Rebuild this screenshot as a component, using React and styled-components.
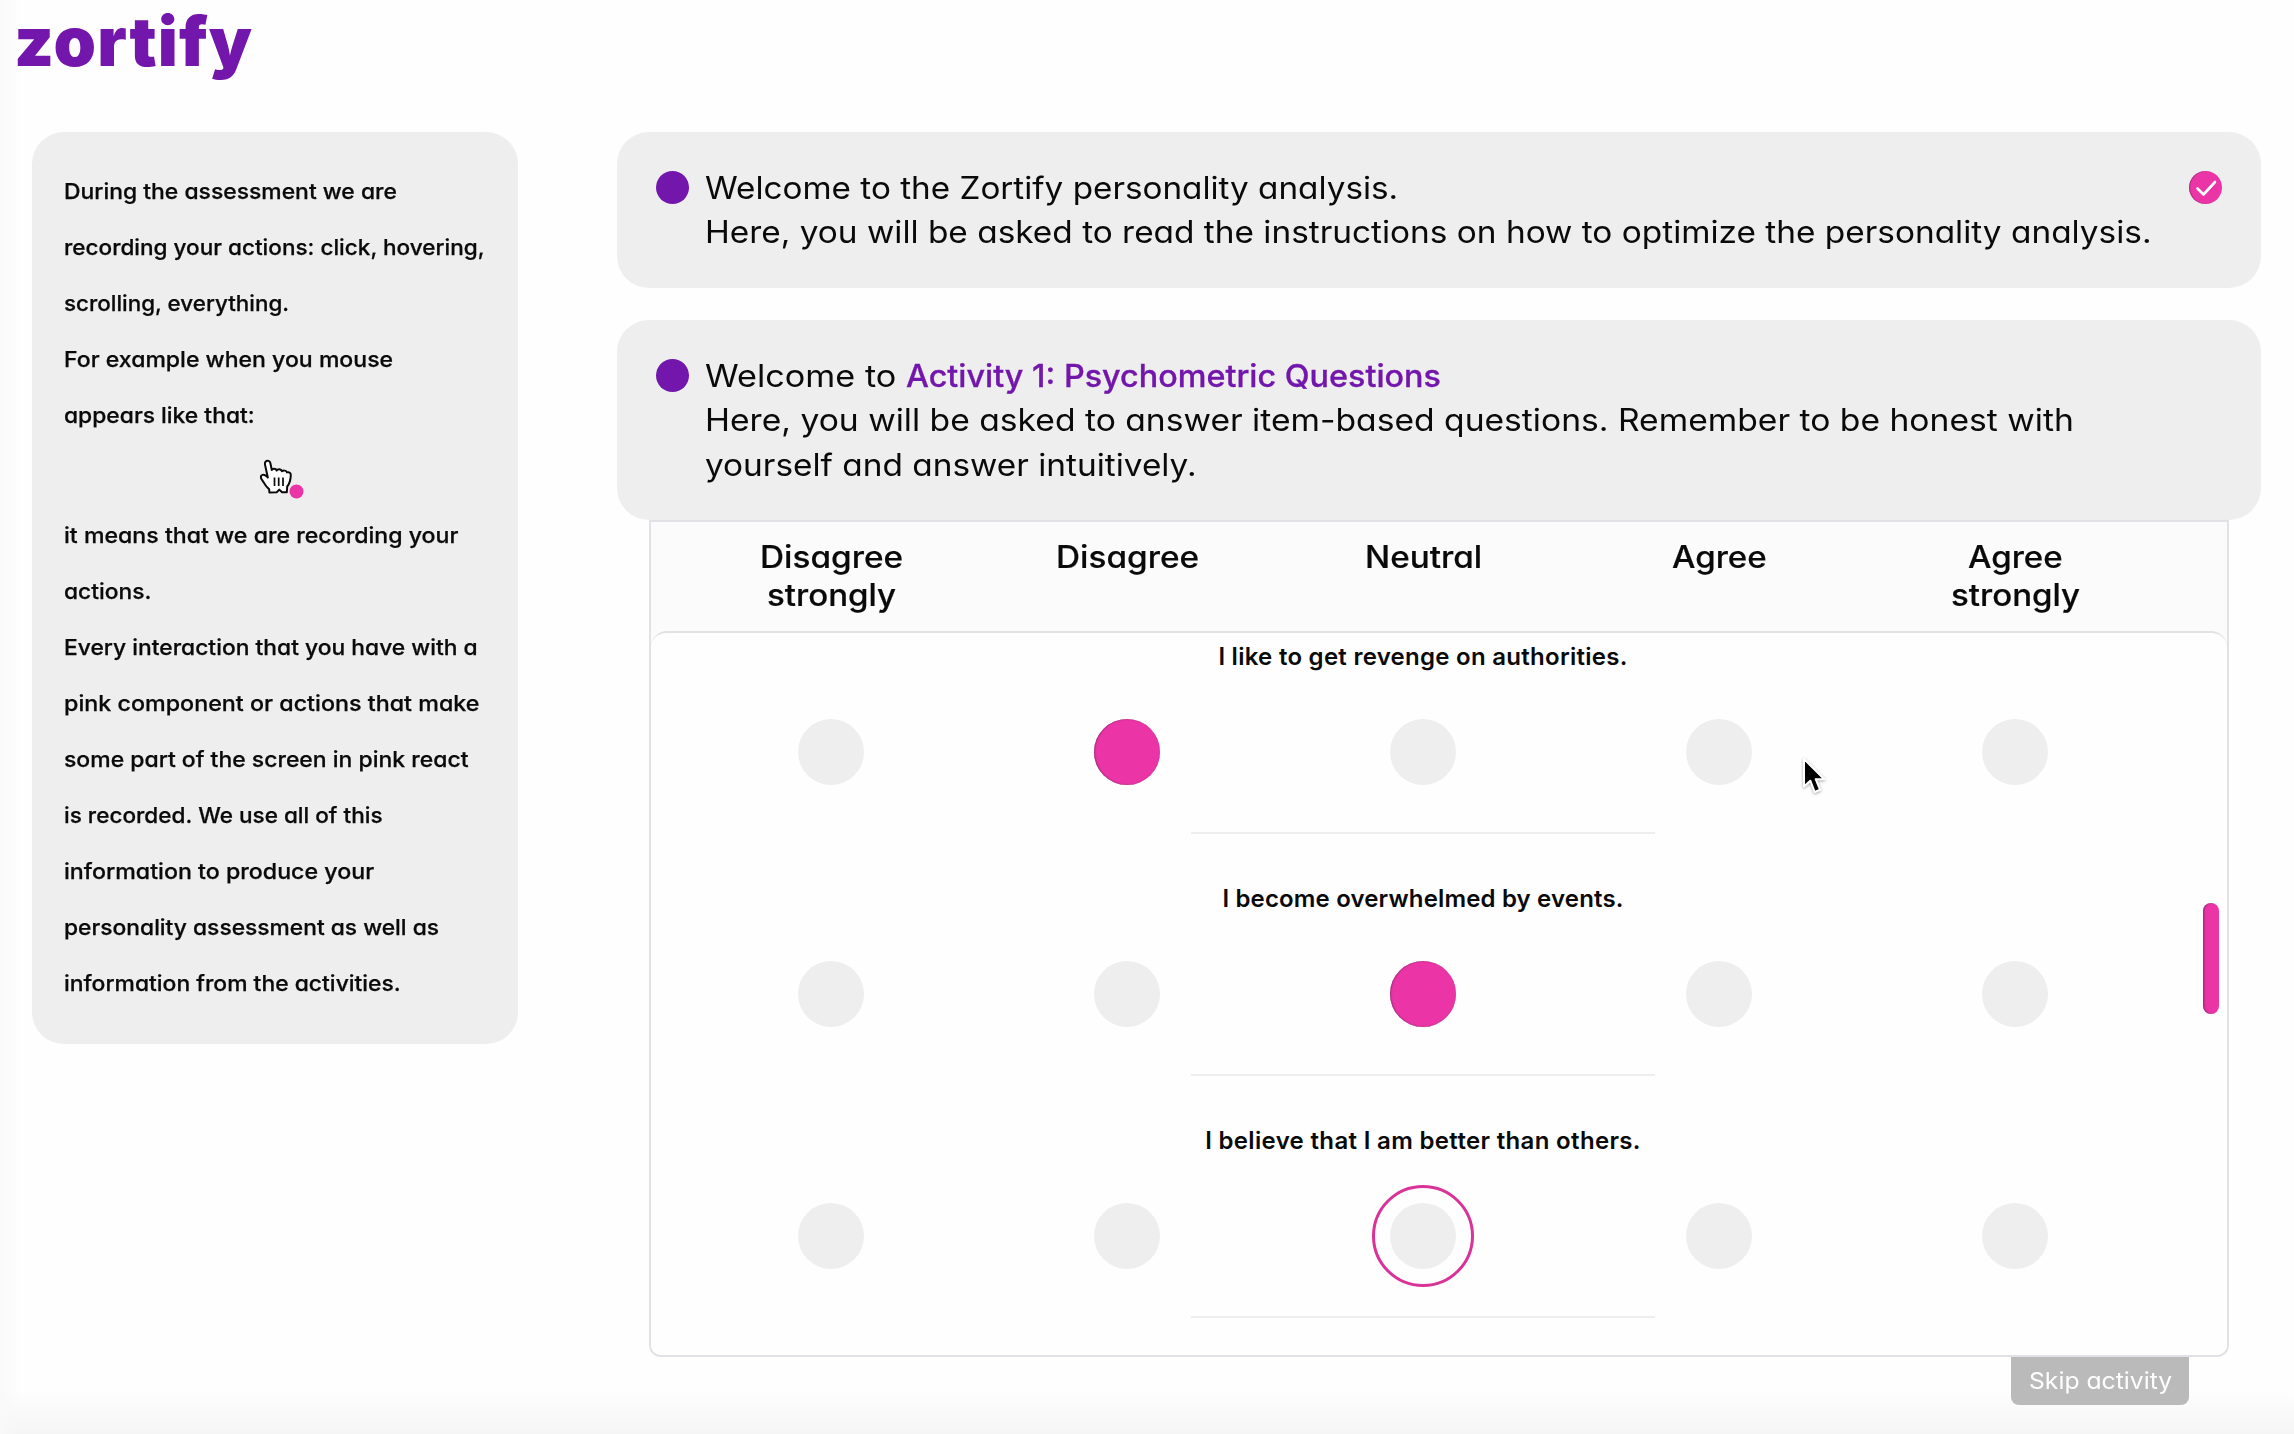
import React, { useLayoutEffect, useRef, useState } from "react";
import styled, { createGlobalStyle, css } from "styled-components";

const PINK = "#eb35a6";
const PURPLE = "#7316ab";

const GlobalStyle = createGlobalStyle`
  * { box-sizing: border-box; }
  body {
    margin: 0;
    background: #fefefe;
    color: #0a0a0a;
    font-family: Inter, "Open Sans", sans-serif;
    overflow: hidden;
  }
`;

const Page = styled.div`
  height: 1434px;
  display: flex;
  flex-direction: column;
  background:
    linear-gradient(to right, #f9f9f9, rgba(254, 254, 254, 0) 20px),
    linear-gradient(to top, #f5f5f5, rgba(254, 254, 254, 0) 44px),
    #fefefe;
  font-feature-settings: "cv11";
`;

const Header = styled.header`
  height: 132px;
  padding-left: 14px;
`;

const Wordmark = styled.div`
  font-weight: 900;
  font-size: 68px;
  line-height: 83px;
  color: ${PURPLE};
  white-space: nowrap;
`;

const Main = styled.main`
  display: flex;
  align-items: flex-start;
  gap: 99px;
  padding: 0 33px 0 32px;
`;

const SideCard = styled.aside`
  flex: 0 0 486px;
  height: 911.5px;
  padding: 31px 29px 0 31.5px;
  border-radius: 32px;
  background: #eeeeee;
  font-size: 22px;
  font-weight: 500;
  line-height: 56px;
  -webkit-text-stroke: 0.25px #0a0a0a;
`;

const TextRow = styled.div`
  white-space: nowrap;
`;

const PointerRow = styled.div`
  height: 64px;
  padding: 15.5px 0 0 195px;
  line-height: 0;
`;

const Content = styled.section`
  flex: 1;
  display: flex;
  flex-direction: column;
`;

const StepCard = styled.article`
  display: flex;
  align-items: flex-start;
  height: ${(p) => p.$height}px;
  margin-bottom: ${(p) => p.$gap || 0}px;
  padding: 33.5px 39px 0;
  border-radius: 32px;
  background: #eeeeee;
  font-size: 31px;
  line-height: 44.6px;
`;

const Bullet = styled.span`
  flex: none;
  width: 33px;
  height: 33px;
  margin: 5.5px 16px 0 0;
  border-radius: 50%;
  background: ${PURPLE};
`;

const StepText = styled.div`
  flex: 1;
`;

const Highlight = styled.strong`
  font-weight: 500;
  color: ${PURPLE};
  -webkit-text-stroke: 0.3px ${PURPLE};
`;

const Done = styled.span`
  flex: none;
  display: grid;
  place-items: center;
  width: 33px;
  height: 33px;
  margin-top: 5.5px;
  border-radius: 50%;
  background: ${PINK};
  box-shadow: inset 1px 0 1px rgba(110, 40, 100, 0.6);
`;

const Scale = styled.div`
  display: flex;
  flex-direction: column;
  height: 837px;
  margin: 0 32px;
  border: 2px solid #e1e1e6;
  border-radius: 0 0 12px 12px;
  background: #fbfbfb;
`;

const columns = css`
  display: grid;
  grid-template-columns: repeat(5, 296px);
  padding-left: 32px;
`;

const ScaleHeader = styled.div`
  ${columns}
  height: 109px;
  padding-top: 16px;
  font-size: 31px;
  font-weight: 500;
  line-height: 38.4px;
  text-align: center;
  -webkit-text-stroke: 0.2px #0a0a0a;
`;

const Viewport = styled.div`
  flex: 1;
  display: flex;
  justify-content: space-between;
  overflow: hidden;
  border-top: 2px solid #e1e1e6;
  border-radius: 16px 16px 10px 10px;
  background: #fefefe;
`;

const Questions = styled.div`
  margin-top: -41px;
`;

const Question = styled.div`
  display: flex;
  flex-direction: column;
  height: 242px;
`;

const Prompt = styled.div`
  width: 1544px;
  padding: 50px 0 0 0;
  height: 109px;
  font-size: 24px;
  font-weight: 600;
  line-height: 30px;
  text-align: center;
  font-feature-settings: normal;
`;

const Answers = styled.div`
  ${columns}
  height: 102px;
  place-items: center;
`;

const Ring = styled.span`
  display: grid;
  place-items: center;
  width: 102px;
  height: 102px;
  border-radius: 50%;
  border: 3px solid ${(p) => (p.$hovered ? "#d93399" : "transparent")};
`;

const Choice = styled.span`
  width: 66px;
  height: 66px;
  border-radius: 50%;
  background: ${(p) => (p.$selected ? PINK : "#eeeeee")};
  box-shadow: ${(p) =>
    p.$selected ? "inset 1px 0 1.5px rgba(110, 40, 100, 0.55), inset 0 0 1px #b03383" : "none"};
`;

const Divider = styled.hr`
  width: 464px;
  height: 2px;
  margin: 29px 0 0 540px;
  border: 0;
  background: #eeeeee;
`;

const Thumb = styled.div`
  width: 16px;
  height: 111px;
  margin: 270px 8px 0 0;
  border-radius: 8px;
  background: ${PINK};
  box-shadow: inset 1.5px 0 1.5px rgba(110, 40, 100, 0.6);
`;

const SkipButton = styled.button`
  align-self: flex-end;
  width: 178px;
  height: 48px;
  margin-right: 72px;
  padding: 0;
  border: 0;
  border-radius: 0 0 8px 8px;
  background: #bababa;
  color: #fefefe;
  font: 400 23.5px/46px Inter, sans-serif;
  font-feature-settings: "cv11";
`;

const Cursor = styled.svg`
  position: absolute;
  left: 1800px;
  top: 755px;
`;

const Fitted = styled.span`
  display: inline-block;
  white-space: pre;
`;

const Slot = styled.span`
  display: inline-block;
  text-align: left;
  vertical-align: top;
`;

const Glyphs = styled.span`
  display: inline-block;
  white-space: pre;
  vertical-align: top;
  transform-origin: 0 50%;
`;

/* Tracks the letters out or in so that the line takes up the given width. */
function Fit({ width, children }) {
  const ref = useRef(null);
  const [spacing, setSpacing] = useState(0);
  useLayoutEffect(() => {
    const natural = ref.current.offsetWidth;
    setSpacing((width - natural) / children.length);
  }, [width, children]);
  return (
    <Fitted ref={ref} style={{ letterSpacing: `${spacing}px` }}>
      {children}
    </Fitted>
  );
}

/* Widens the letterforms themselves so that the line takes up the given width. */
function Wide({ width, children }) {
  const ref = useRef(null);
  const [ratio, setRatio] = useState(1);
  useLayoutEffect(() => {
    setRatio(width / ref.current.offsetWidth);
  }, [width, children]);
  return (
    <Slot style={{ width: `${width}px` }}>
      <Glyphs ref={ref} style={{ transform: `scaleX(${ratio})` }}>
        {children}
      </Glyphs>
    </Slot>
  );
}

const introLines = [
  ["During the assessment we are", 333],
  ["recording your actions: click, hovering,", 421],
  ["scrolling, everything.", 225],
  ["For example when you mouse", 329],
  ["appears like that:", 191],
];

const detailLines = [
  ["it means that we are recording your", 394.5],
  ["actions.", 87],
  ["Every interaction that you have with a", 414],
  ["pink component or actions that make", 416],
  ["some part of the screen in pink react", 405],
  ["is recorded. We use all of this", 319],
  ["information to produce your", 310],
  ["personality assessment as well as", 375],
  ["information from the activities.", 337],
];

const labels = [
  [["Disagree", 143], ["strongly", 129]],
  [["Disagree", 143]],
  [["Neutral", 117]],
  [["Agree", 95]],
  [["Agree", 95], ["strongly", 129]],
];

const questions = [
  { text: "I like to get revenge on authorities.", width: 409, selected: 1 },
  { text: "I become overwhelmed by events.", width: 401, selected: 2 },
  { text: "I believe that I am better than others.", width: 436, hovered: 2 },
];

const Lines = ({ items }) =>
  items.map(([text, width]) => (
    <TextRow key={text}>
      <Wide width={width}>{text}</Wide>
    </TextRow>
  ));

const HandPointer = () => (
  <svg width="48" height="42" viewBox="0 0 48 42">
    <path
      d="M7 2.500c1.700-1.500 4.200-.7 4.700 1.700l1.400 6.800c.8-1.500 3.900-1.700 4.900.5 1.200-1.800 4.300-1.600 5.200.7 1.500-1 4.400-.9 5.100 1.200 2.300-.7 3.900.6 3.800 2.700-.2 6.400-1.800 9.200-3.600 11.400l-.4 5.700-4.700.1-2.800-2.700-2.600 2.700-7.300.1-.3-3.400C7.500 28.300 5.700 24.200 3.500 21.200c-1.700-2-2-4.700.3-5.300 2-.5 4.600 1.300 5.300 2.600L6.300 5.600c-.3-1.300-.1-2.300.7-3.100Z"
      transform="translate(-.3 0)"
      fill="#fefefe"
      stroke="#0a0a0a"
      strokeWidth="2"
      strokeLinejoin="round"
    />
    <path d="M15.500 18.500v8.500M19.700 18.500v8.500M24 18.500v8.500" stroke="#0a0a0a" strokeWidth="1.700" />
    <circle cx="37.500" cy="32.500" r="7" fill={PINK} />
  </svg>
);

export default function App() {
  return (
    <Page>
      <GlobalStyle />
      <Header>
        <Wordmark>
          <Fit width={239}>zortify</Fit>
        </Wordmark>
      </Header>
      <Main>
        <SideCard>
          <Lines items={introLines} />
          <PointerRow>
            <HandPointer />
          </PointerRow>
          <Lines items={detailLines} />
        </SideCard>
        <Content>
          <StepCard $height={156} $gap={32}>
            <Bullet />
            <StepText>
              <Lines
                items={[
                  ["Welcome to the Zortify personality analysis.", 693],
                  ["Here, you will be asked to read the instructions on how to optimize the personality analysis.", 1446],
                ]}
              />
            </StepText>
            <Done>
              <svg width="22" height="22" viewBox="0 0 22 22">
                <path d="M2.500 11.500l6 6L20 5" fill="none" stroke="#fff" strokeWidth="2.600" strokeLinecap="round" strokeLinejoin="round" />
              </svg>
            </Done>
          </StepCard>
          <StepCard $height={200}>
            <Bullet />
            <StepText>
              <TextRow>
                <Wide width={201}>{"Welcome to "}</Wide>
                <Highlight>
                  <Wide width={535}>Activity 1: Psychometric Questions</Wide>
                </Highlight>
              </TextRow>
              <Lines
                items={[
                  ["Here, you will be asked to answer item-based questions. Remember to be honest with", 1369],
                  ["yourself and answer intuitively.", 491],
                ]}
              />
            </StepText>
          </StepCard>
          <Scale>
            <ScaleHeader>
              {labels.map((label, i) => (
                <div key={i}>
                  <Lines items={label} />
                </div>
              ))}
            </ScaleHeader>
            <Viewport>
              <Questions>
                {questions.map((q) => (
                  <Question key={q.text}>
                    <Prompt>
                      <Fit width={q.width}>{q.text}</Fit>
                    </Prompt>
                    <Answers>
                      {labels.map((_, i) => (
                        <Ring key={i} $hovered={q.hovered === i}>
                          <Choice $selected={q.selected === i} />
                        </Ring>
                      ))}
                    </Answers>
                    <Divider />
                  </Question>
                ))}
              </Questions>
              <Thumb />
            </Viewport>
          </Scale>
          <SkipButton>
            <Wide width={143}>Skip activity</Wide>
          </SkipButton>
        </Content>
      </Main>
      <Cursor width="30" height="46" viewBox="0 0 30 46">
        <path
          d="M4 4v27.500l6.300-5.800 4.400 11.300 5.400-2.200-4.400-10.600h8.600Z"
          fill="#000"
          stroke="#fff"
          strokeWidth="2"
          strokeLinejoin="round"
          filter="drop-shadow(0 1.500px 1.500px rgba(0,0,0,.35))"
        />
      </Cursor>
    </Page>
  );
}
